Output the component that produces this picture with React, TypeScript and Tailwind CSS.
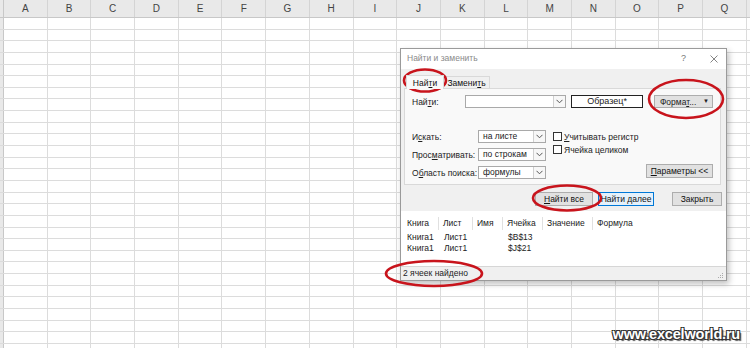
import React from "react";

const COLS = "ABCDEFGHIJKLMNOPQ".split("");
const ROWS = Array.from({ length: 29 }, (_, i) => i);

const Chevron = () => (
  <svg width="7" height="5" viewBox="0 0 7 5">
    <polyline points="0.5,0.8 3.5,3.8 6.5,0.8" fill="none" stroke="#555" strokeWidth="1" />
  </svg>
);

const Combo = ({ value, w }: { value: string; w: string }) => (
  <div className={`flex h-[13px] ${w} border border-[#a9a9a9] bg-white`}>
    <div className="flex-1 pl-[4px] leading-[11px] text-[8.5px] text-[#222]">{value}</div>
    <div className="flex w-[12px] items-center justify-center border-l border-[#d0d0d0] bg-[#f7f7f7]">
      <Chevron />
    </div>
  </div>
);

const Btn = ({ label, w, primary }: { label: React.ReactNode; w: string; primary?: boolean }) => (
  <div
    className={`flex h-[14px] ${w} items-center justify-center border text-[8.5px] text-[#111] ${
      primary ? "border-[#0078d7] bg-[#e5f1fb]" : "border-[#adadad] bg-[#e1e1e1]"
    }`}
  >
    {label}
  </div>
);

const Sheet = () => (
  <div className="flex flex-col">
    <div className="flex h-[18px] border-b border-[#c8c8c8] bg-[#e9e9e9]">
      <div className="w-[4px] border-r border-[#c8c8c8]" />
      {COLS.map((c) => (
        <div
          key={c}
          className="flex w-[43.7px] shrink-0 items-center justify-center border-r border-[#d4d4d4] text-[10px] text-[#444]"
        >
          {c}
        </div>
      ))}
    </div>
    {ROWS.map((r) => (
      <div key={r} className="flex h-[11.65px] border-b border-[#dcdcdc]">
        <div className="w-[4px] border-r border-[#c8c8c8] bg-[#e9e9e9]" />
        {COLS.map((c) => (
          <div key={c} className="w-[43.7px] shrink-0 border-r border-[#dcdcdc]" />
        ))}
      </div>
    ))}
  </div>
);

const Dialog = () => (
  <div className="absolute left-[400px] top-[48px] flex h-[233px] w-[327px] flex-col border border-[#9a9a9a] bg-[#f0f0f0] shadow-[2px_3px_6px_rgba(0,0,0,0.25)]">
    {/* title bar */}
    <div className="flex h-[20px] items-center bg-white pl-[6px] pr-[8px] text-[8.5px] text-[#8a8a8a]">
      <span className="flex-1">Найти и заменить</span>
      <span className="mr-[24px] text-[9px] text-[#777]">?</span>
      <svg width="8" height="8" viewBox="0 0 8 8">
        <path d="M0.5 0.5 L7.5 7.5 M7.5 0.5 L0.5 7.5" stroke="#777" strokeWidth="0.9" />
      </svg>
    </div>

    {/* tabs */}
    <div className="ml-[5px] mt-[6px] flex h-[14px] items-end text-[8.5px] text-[#111]">
      <div className="relative z-10 -mb-px flex h-[14px] w-[38px] items-center justify-center border border-b-0 border-[#d9d9d9] bg-[#f9f9f9]">
        Най<u>т</u>и
      </div>
      <div className="flex h-[12px] w-[46px] items-center justify-center border border-b-0 border-l-0 border-[#d9d9d9] bg-[#f0f0f0]">
        Замени<u>т</u>ь
      </div>
    </div>

    {/* panel */}
    <div className="ml-[3px] mr-[5px] flex h-[98px] flex-col border border-[#d9d9d9] bg-[#f9f9f9] px-[7px] pt-[6px] text-[8.5px] text-[#222]">
      <div className="flex h-[13px] items-center">
        <span className="w-[54px]">
          Най<u>т</u>и:
        </span>
        <Combo value="" w="w-[103px]" />
        <div className="ml-[5px] flex h-[13px] w-[73px] items-center justify-center border border-[#222] bg-white text-[9px]">
          Образец*
        </div>
        <div className="ml-[11px] flex h-[13px] w-[60px] items-center border border-[#adadad] bg-[#e1e1e1] pl-[5px] pr-[3px] text-[8.5px]">
          <span className="flex-1">
            Форма<u>т</u>...
          </span>
          <span className="text-[6px]">▼</span>
        </div>
      </div>

      <div className="mt-[22px] flex">
        <div className="flex flex-col gap-[5px]">
          <div className="flex h-[13px] items-center">
            <span className="w-[66px]">
              И<u>с</u>кать:
            </span>
            <Combo value="на листе" w="w-[68px]" />
          </div>
          <div className="flex h-[13px] items-center">
            <span className="w-[66px]">
              Прос<u>м</u>атривать:
            </span>
            <Combo value="по строкам" w="w-[68px]" />
          </div>
          <div className="flex h-[13px] items-center">
            <span className="w-[66px]">
              О<u>б</u>ласть поиска:
            </span>
            <Combo value="формулы" w="w-[68px]" />
          </div>
        </div>

        <div className="ml-[7px] mt-[2px] flex flex-col gap-[4px]">
          <div className="flex h-[9px] items-center gap-[2px]">
            <div className="h-[9px] w-[9px] border border-[#333] bg-white" />
            <span>
              <u>У</u>читывать регистр
            </span>
          </div>
          <div className="flex h-[9px] items-center gap-[2px]">
            <div className="h-[9px] w-[9px] border border-[#333] bg-white" />
            <span>Ячейка целиком</span>
          </div>
        </div>

        <div className="ml-auto flex flex-col justify-end pb-[1px]">
          <Btn
            w="w-[67px]"
            label={
              <span>
                <u>П</u>араметры &lt;&lt;
              </span>
            }
          />
        </div>
      </div>
    </div>

    {/* buttons */}
    <div className="mr-[4px] mt-[7px] flex justify-end gap-[5px]">
      <Btn
        w="w-[58px]"
        label={
          <span>
            <u>Н</u>айти все
          </span>
        }
      />
      <Btn w="w-[56px]" primary label="Найти далее" />
      <div className="w-[8px]" />
      <Btn w="w-[50px]" label="Закрыть" />
    </div>

    {/* results */}
    <div className="mt-[5px] flex h-[56px] flex-col bg-white text-[8.5px] text-[#222]">
      <div className="mt-[6px] flex h-[13px] items-center">
        <div className="w-[38px] border-r border-[#e0e0e0] pl-[6px]">Книга</div>
        <div className="w-[34px] border-r border-[#e0e0e0] pl-[4px]">Лист</div>
        <div className="w-[30px] border-r border-[#e0e0e0] pl-[4px]">Имя</div>
        <div className="w-[40px] border-r border-[#e0e0e0] pl-[4px]">Ячейка</div>
        <div className="w-[50px] border-r border-[#e0e0e0] pl-[4px]">Значение</div>
        <div className="pl-[4px]">Формула</div>
      </div>
      <div className="mt-[2px] flex h-[11px] items-center">
        <div className="w-[38px] pl-[6px]">Книга1</div>
        <div className="w-[64px] pl-[5px]">Лист1</div>
        <div className="pl-[5px]">$B$13</div>
      </div>
      <div className="flex h-[11px] items-center">
        <div className="w-[38px] pl-[6px]">Книга1</div>
        <div className="w-[64px] pl-[5px]">Лист1</div>
        <div className="pl-[5px]">$J$21</div>
      </div>
    </div>

    {/* status */}
    <div className="flex flex-1 items-center border-t border-[#d6d6d6] pl-[2px] pr-[2px] text-[8.5px] text-[#222]">
      <span className="flex-1">2 ячеек найдено</span>
      <svg width="7" height="7" viewBox="0 0 7 7" className="self-end mb-[1px]">
        <g fill="#aaa">
          <rect x="5" y="1" width="1" height="1" />
          <rect x="3" y="3" width="1" height="1" />
          <rect x="5" y="3" width="1" height="1" />
          <rect x="1" y="5" width="1" height="1" />
          <rect x="3" y="5" width="1" height="1" />
          <rect x="5" y="5" width="1" height="1" />
        </g>
      </svg>
    </div>
  </div>
);

export default function App() {
  return (
    <div className="relative h-[348px] w-[750px] overflow-hidden bg-white font-['Liberation_Sans',Arial,sans-serif]">
      <Sheet />
      <Dialog />

      {/* red annotation marks */}
      <svg className="pointer-events-none absolute left-0 top-0" width="750" height="348">
        <g fill="none" stroke="#c8141c" strokeWidth="2.6">
          <ellipse cx="425" cy="80.5" rx="21" ry="11" />
          <ellipse cx="686" cy="99" rx="37" ry="19" />
          <ellipse cx="567" cy="198" rx="34" ry="12.5" />
          <ellipse cx="434" cy="273.5" rx="48" ry="12.5" />
        </g>
      </svg>

      <div className="absolute right-[10px] top-[324px] text-[14.5px] font-bold tracking-[-0.2px] text-white [text-shadow:1px_1px_0_#333,-1px_-1px_0_#333,1px_-1px_0_#333,-1px_1px_0_#333,2px_2px_1px_#555]">
        www.excelworld.ru
      </div>
    </div>
  );
}
